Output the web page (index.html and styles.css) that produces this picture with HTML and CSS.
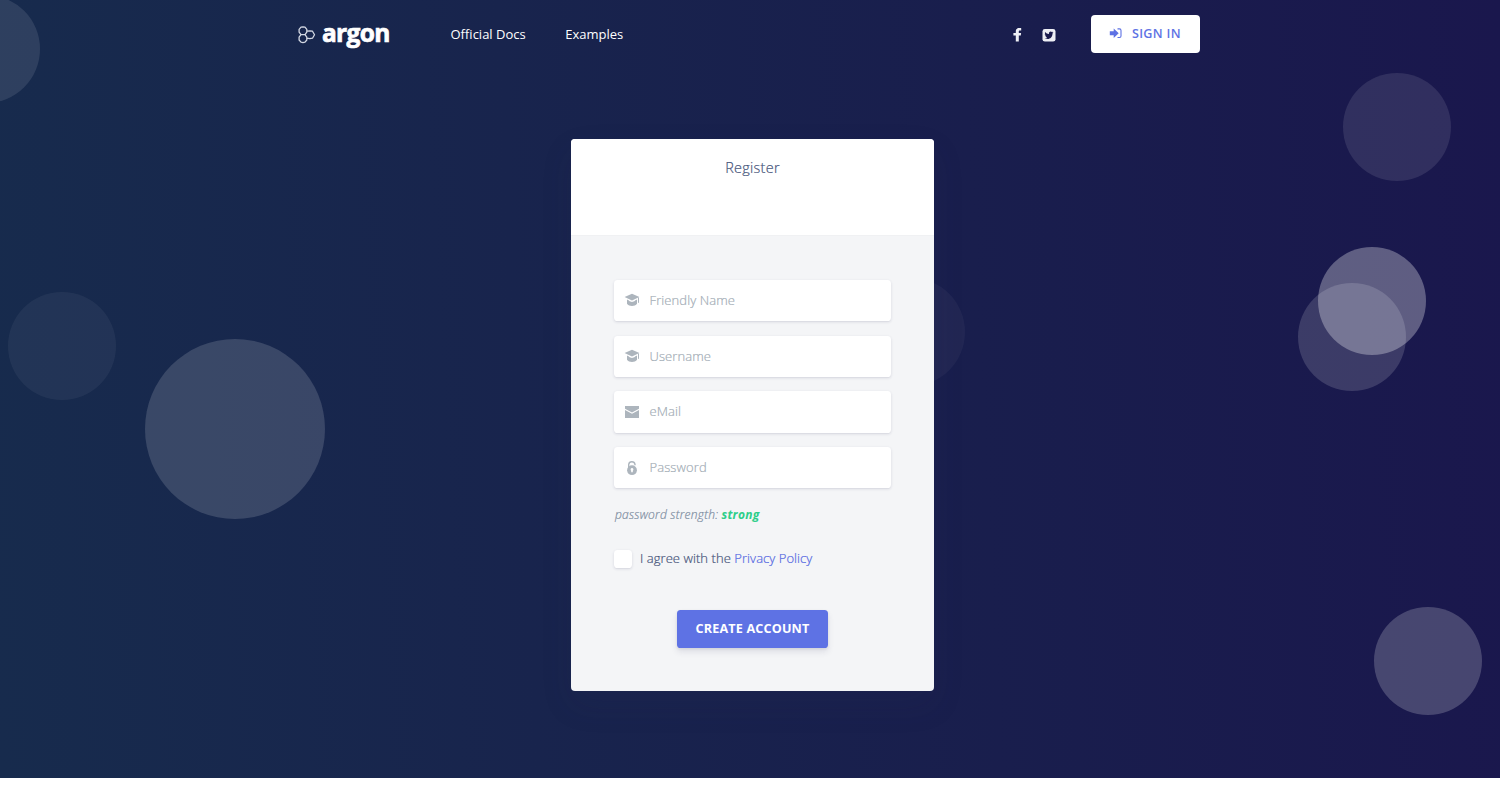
FILE: index.html
```html
<!DOCTYPE html>
<html lang="en">
<head>
<meta charset="utf-8">
<title>Register</title>
<link rel="stylesheet" href="styles.css">
</head>
<body>
<main class="hero">
  <div class="shapes">
    <span class="shape s1"></span><span class="shape s2"></span><span class="shape s3"></span><span class="shape s4"></span>
    <span class="shape s5"></span><span class="shape s6"></span><span class="shape s7"></span><span class="shape s8"></span>
  </div>
  <header class="navbar">
    <a class="brand">
      <svg class="mark" width="18" height="18" viewBox="0 0 18 18" fill="none" stroke="#d3d8e3" stroke-width="1.3" stroke-linejoin="round"><path d="M3 1.200L5 .8l2 .4 1.800 2.200v2.800L7 8.700H3L1.100 6.200V3.400zM3 8.700h4l1.800 2.500V14L7 16.200l-2 .4-2-.4L1.100 14v-2.800zM8.800 5.200l3-.4 2.700.4 2 3.500-2 3.500-2.700.4-3-.4"/></svg>
      <span class="brand-name">argon</span>
    </a>
    <nav class="links"><a>Official Docs</a><a>Examples</a></nav>
    <div class="actions">
      <svg class="fb" width="9" height="14" viewBox="0 0 9 14" fill="#eeeff5"><path d="M8.200.2v2.400H6.900c-.8 0-1.100.4-1.100 1v1.400h2.300l-.3 2.400h-2V13.500H2.800V7.400H.4V5h2.400V3.200C2.800 1.100 4.300.1 6.300.1c.9 0 1.700 0 1.900.1z"/></svg>
      <svg class="tw" width="14" height="13" viewBox="0 0 14 13"><rect x=".5" y="0" width="13" height="12.600" rx="2.400" fill="#eeeff5"/><path d="M11.500 3.500l-1 .9c0 3.300-2.100 5.500-4.900 5.500-1.200 0-2.100-.3-3-.8 1 .1 1.800-.1 2.500-.7-.8-.1-1.400-.6-1.600-1.300h.8C3.300 6.800 2.800 6.100 2.800 5.200l.8.2C2.800 4.700 2.700 3.700 3.100 2.900c1 1.200 2.300 1.900 3.900 2C6.700 3.500 7.600 2.600 8.700 2.600c.5 0 .9.2 1.200.5l1.200-.4-.7 1z" fill="#1b1b4d"/></svg>
      <a class="signin">
        <svg width="13" height="11" viewBox="0 0 13 11"><path d="M.8 3.300h3.900V.6L9.700 5.200 4.700 9.900V7.200H.8z" fill="#5e72e4"/><path d="M8.500 .9h2c.9 0 1.500.6 1.500 1.500v5.600c0 .9-.6 1.500-1.500 1.500h-2" fill="none" stroke="#5e72e4" stroke-width="1.100"/></svg>
        <span>Sign in</span>
      </a>
    </div>
  </header>
  <section class="card">
    <div class="card-head">Register</div>
    <form class="card-body">
      <label class="field">
        <svg width="16" height="14" viewBox="0 0 16 14" fill="#adb5bd"><path d="M8 .7l7.400 3.400L8 7.400.6 4.100zM3 6.800c.9 0 1.700.5 2.300 1.300.9 1.100 4.500 1.100 5.400 0C11.300 7.300 12.100 6.800 13 6.800v4C12 12.300 10 13 8 13s-4-.7-5-2.200z"/><path d="M14.500 4.500v5.300" stroke="#adb5bd"/></svg>
        <span>Friendly Name</span></label>
      <label class="field">
        <svg width="16" height="14" viewBox="0 0 16 14" fill="#adb5bd"><path d="M8 .7l7.400 3.400L8 7.400.6 4.100zM3 6.800c.9 0 1.700.5 2.300 1.300.9 1.100 4.500 1.100 5.400 0C11.300 7.300 12.100 6.800 13 6.800v4C12 12.300 10 13 8 13s-4-.7-5-2.200z"/><path d="M14.500 4.500v5.300" stroke="#adb5bd"/></svg>
        <span>Username</span></label>
      <label class="field mail">
        <svg width="16" height="14" viewBox="0 0 16 14" fill="#adb5bd"><path d="M1 1h14v2.700L8 7.500 1 3.700zM1 4.900l7 3.800 7-3.800V13H1z"/></svg>
        <span>eMail</span></label>
      <label class="field">
        <svg class="lock" width="16" height="16" viewBox="0 0 16 16"><path d="M4.700 8V4.500a3.200 3.200 0 0 1 6.300-.1v.8" fill="none" stroke="#adb5bd" stroke-width="1.400"/><circle cx="8" cy="10.200" r="4.900" fill="#adb5bd"/><path d="M8 8a1.500 1.500 0 0 1 .8 2.700v1.500H7.200v-1.500A1.500 1.500 0 0 1 8 8z" fill="#fff"/></svg>
        <span>Password</span></label>
      <div class="strength">password strength: <b>strong</b></div>
      <div class="agree"><span class="check"></span><span>I agree with the <a>Privacy Policy</a></span></div>
      <div class="submit">Create account</div>
    </form>
  </section>
</main>
</body>
</html>
```
FILE: styles.css
```css
* { box-sizing: border-box; }
body { margin: 0; height: 800px; overflow: hidden; background: #fff; font-family: "Open Sans", sans-serif; font-size: 13px; color: #525f7f; }
.hero { position: relative; height: 778px; overflow: hidden; background: linear-gradient(87deg, #172b4d 0, #1a174d 100%); }
.shape { position: absolute; width: 108px; height: 108px; border-radius: 50%; background: #fff; }
.s1 { left: -68px; top: -5px; opacity: .1; }
.s2 { left: 1343px; top: 73px; opacity: .1; }
.s3 { left: 8px; top: 292px; opacity: .05; }
.s4 { left: 145px; top: 339px; width: 180px; height: 180px; opacity: .15; }
.s5 { left: 1298px; top: 283px; opacity: .15; }
.s6 { left: 1318px; top: 247px; opacity: .3; }
.s7 { left: 1374px; top: 607px; opacity: .2; }
.s8 { left: 857px; top: 278px; opacity: .04; }
.navbar { position: relative; width: 902px; margin-left: 298px; height: 68px; display: flex; align-items: center; color: #fff; }
.brand { display: flex; align-items: center; width: 152.500px; gap: 6px; }
.mark { flex: none; margin-top: 1px; }
.brand-name { font-size: 24.500px; line-height: 30px; font-weight: 700; letter-spacing: -.7px; -webkit-text-stroke: .7px #fff; margin-top: -2px; }
.links { display: flex; gap: 39.500px; line-height: 20px; color: #fff; }
.actions { display: flex; align-items: center; margin-left: auto; }
.fb { margin: 1px 20px 0 0; }
.tw { margin: 2px 35px 0 0; }
.signin { display: flex; align-items: center; gap: 10px; width: 109px; height: 38px; padding: 0 0 2px 18px; border-radius: 4px; background: #fff; color: #5e72e4; font-size: 12.600px; font-weight: 600; text-transform: uppercase; letter-spacing: .3px; }
.card { position: relative; width: 363px; height: 552px; margin: 71px 0 0 571px; border-radius: 4px; overflow: hidden; background: #f4f5f7; box-shadow: 0 13.500px 31.500px rgba(50,50,93,.1); }
.card-head { height: 97px; padding-top: 18px; background: #fff; border-bottom: 1px solid #f0f1f3; text-align: center; font-size: 14.400px; line-height: 22px; font-weight: 300; letter-spacing: .3px; color: #46547a; -webkit-text-stroke: .2px; }
.card-body { padding: 44px 43px; display: flex; flex-direction: column; font-weight: 300; }
.field { display: flex; align-items: center; height: 41.400px; margin-bottom: 14.300px; padding: 0 0 1px 10px; gap: 9.500px; border-radius: 3.600px; background: #fff; color: #a3adb6; letter-spacing: .1px; -webkit-text-stroke: .2px; box-shadow: 0 1px 3px rgba(50,50,93,.15), 0 1px 0 rgba(0,0,0,.02); }
.mail span { margin-top: -1px; }
.lock { margin-top: 1px; }
.strength { height: 22px; line-height: 22px; margin-top: 1px; padding-left: 1px; font-size: 12px; letter-spacing: .24px; white-space: nowrap; font-style: italic; color: #7c8c9f; -webkit-text-stroke: .2px; }
.strength b { color: #2dce89; font-weight: 700; -webkit-text-stroke: 0; }
.agree { display: flex; align-items: center; gap: 8px; height: 22px; margin-top: 22px; color: #46547a; letter-spacing: .06px; -webkit-text-stroke: .2px; }
.agree > span:last-child { margin-top: -1px; }
.check { width: 18px; height: 18px; border-radius: 3.600px; background: #fff; box-shadow: 0 1px 3px rgba(50,50,93,.15), 0 1px 0 rgba(0,0,0,.02); }
.agree a { color: #5468e2; }
.submit { align-self: center; width: 151px; height: 38px; line-height: 37px; margin-top: 40.500px; border-radius: 3.600px; background: #5e72e4; color: #fff; text-align: center; text-transform: uppercase; font-size: 12.600px; letter-spacing: .18px; font-weight: 700; box-shadow: 0 4px 6px rgba(50,50,93,.11), 0 1px 3px rgba(0,0,0,.08); }
```
